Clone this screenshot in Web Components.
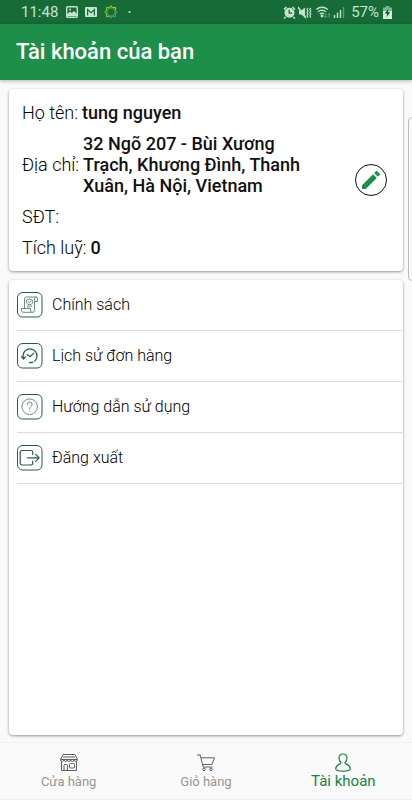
<!DOCTYPE html>
<html lang="vi">
<head>
<meta charset="utf-8">
<meta name="viewport" content="width=device-width, initial-scale=1">
<title>Tài khoản của bạn</title>
<style>
html, body { height: 100%; }
body { margin: 0; background: #fafafa; color: #111; font-family: Roboto, "Noto Sans", sans-serif; }
</style>
</head>
<body>
<account-app></account-app>
<script>
function define(name, html) {
  const template = document.createElement('template');
  template.innerHTML = html;
  customElements.define(name, class extends HTMLElement {
    constructor() {
      super();
      this.attachShadow({ mode: 'open' }).append(template.content.cloneNode(true));
    }
  });
}

define('status-bar', `
<style>
:host { display: flex; align-items: center; justify-content: space-between; height: 24px; padding: 0 20px 0 21px; background: #176b37; color: #c5e3cf; font-size: 15px; line-height: 24px; }
div { display: flex; align-items: center; }
svg { display: block; flex: none; }
.left svg:first-of-type { margin-left: 8px; }
.left svg + svg { margin-left: 7px; }
.right { gap: 2px; }
.pct { margin: 0 2px 0 4px; }
</style>
<div class="left"><span>11:48</span>
<svg width="12" height="12" viewBox="0 0 12 12"><rect x=".7" y=".7" width="10.6" height="10.6" rx="1" fill="none" stroke="#c5e3cf" stroke-width="1.4"/><path d="M1 10V8.500L4 5.500 5.700 7 8 5l3 3v2z" fill="#c5e3cf"/><circle cx="4" cy="3.500" r="1" fill="#c5e3cf"/></svg>
<svg width="12" height="12" viewBox="0 0 12 12"><rect y="1" width="12" height="10" rx="1" fill="#c5e3cf"/><path d="M2.600 9.500V3.600L6 6.600 9.400 3.600V9.500" fill="none" stroke="#176b37" stroke-width="1.2"/></svg>
<svg width="14" height="14" viewBox="0 0 14 14" fill="none" stroke-width="1"><circle cx="7" cy="7" r="4.2" stroke="#6eb541"/><path d="M5.2 2.6 7 .7l1.8 1.9M9 2.5l2.6-.1-.1 2.6" stroke="#dcc53b"/><path d="m11.4 5.2 1.9 1.8-1.9 1.8M11.5 9l.1 2.6-2.6-.1M8.8 11.4 7 13.3l-1.8-1.9" stroke="#3b9fa8"/><path d="m5 11.5-2.6.1.1-2.6M2.6 8.8.7 7l1.9-1.800M2.5 5l-.1-2.6L5 2.5" stroke="#8fc53e"/></svg>
<svg width="14" height="14" viewBox="0 0 14 14"><circle cx="4.500" cy="7" r="1.1" fill="#c5e3cf"/></svg></div>
<div class="right">
<svg width="13" height="13" viewBox="0 0 13 13"><path d="M1 3.5 3.5 1M9.5 1 12 3.5M2.5 11 1.2 12.5M10.5 11l1.3 1.5" stroke="#c5e3cf" stroke-width="1.6"/><circle cx="6.5" cy="6.8" r="5" fill="#c5e3cf"/><path d="M6.2 3.8v3.4h3" fill="none" stroke="#176b37" stroke-width="1.3"/></svg>
<svg width="14" height="13" viewBox="0 0 14 13"><path d="M1 4.5h2.2L7 1.5v10L3.2 8.5H1z" fill="#c5e3cf"/><path d="m0 1 8 11" stroke="#c5e3cf" stroke-width="1.4"/><path d="M10 2 9 3.500 10 5 9 6.5 10 8 9 9.5l1 2M12.8 2l-1 1.5 1 1.5-1 1.5 1 1.5-1 1.5 1 2" fill="none" stroke="#c5e3cf" stroke-width="1.2"/></svg>
<svg width="17" height="14" viewBox="0 0 17 14" fill="none" stroke="#c5e3cf" stroke-width="1.4"><path d="M2.3 4.5Q8 0 13.8 4.5M4 6.8Q8 3.7 12 6.8M5.8 9Q8 7.3 10.2 9"/><circle cx="8" cy="11" r=".7" fill="#c5e3cf"/><path d="M11.7 8.5v4M10.2 11l1.5 1.6 1.5-1.6M15 12.5v-4M13.7 10 15 8.4l1.4 1.6" stroke="#5e9c73" stroke-width="1"/></svg>
<svg width="12" height="14" viewBox="0 0 12 14" stroke="#c5e3cf" stroke-width="1.4"><path d="M1.5 13v-3M4.5 13V7.5M7.5 13V5"/><path d="M10.5 13V2" stroke="#5e9c73"/></svg>
<span class="pct">57%</span>
<svg width="9" height="13" viewBox="0 0 9 13"><path d="M2.7 0h3.6v1.5H9V5H0V1.5h2.7z" fill="#7fb08f"/><path d="M0 5h9v8H0z" fill="#d2ecda"/><path d="M5.3 3 1.8 7.4h2.3L3.5 11l3.8-4.8H5z" fill="#12502a"/></svg>
</div>`);

define('app-bar', `
<style>
:host { display: flex; align-items: center; height: 56px; padding: 0 16px; background: #1e8f4a; color: #fff; box-shadow: 0 1px 4px rgba(0,0,0,.3); }
h1 { margin: 0; font-size: 22px; line-height: 28px; font-weight: 500; }
</style><h1><slot></slot></h1>`);

define('surface-card', `
<style>
:host { display: block; background: #fff; border-radius: 4px; box-shadow: 0 1px 3px rgba(0,0,0,.4); }
</style><slot></slot>`);

define('info-row', `
<style>
:host { display: flex; align-items: center; gap: 4px; font-size: 18px; line-height: 21px; }
.label { flex: none; font-weight: 300; color: #000; }
.value { font-weight: 500; color: #111; }
</style>
<span class="label"><slot name="label"></slot></span><span class="value"><slot></slot></span>`);

define('edit-button', `
<style>
:host { display: block; flex: none; }
button { display: grid; place-items: center; width: 32px; height: 32px; padding: 0; border: 1px solid #111; border-radius: 50%; background: #fff; }
svg { display: block; }
</style>
<button type="button" aria-label="Chỉnh sửa"><svg width="24" height="24" viewBox="0 0 24 24" fill="#1e8f4a"><path d="M3 17.25V21h3.75L17.8 9.94l-3.75-3.75zM20.7 7.04a1 1 0 0 0 0-1.41l-2.34-2.34a1 1 0 0 0-1.41 0l-1.83 1.83 3.75 3.75z"/></svg></button>`);

define('profile-details', `
<style>
:host { display: flex; align-items: center; gap: 40px; padding: 13px 16px 13px 13px; }
.rows { flex: 1; min-width: 0; display: grid; gap: 10px; }
</style>
<div class="rows">
<info-row><span slot="label">Họ tên:</span>tung nguyen</info-row>
<info-row><span slot="label">Địa chỉ:</span>32 Ngõ 207 - Bùi Xương Trạch, Khương Đình, Thanh Xuân, Hà Nội, Vietnam</info-row>
<info-row><span slot="label">SĐT:</span></info-row>
<info-row><span slot="label">Tích luỹ:</span>0</info-row>
</div><edit-button></edit-button>`);

define('menu-item', `
<style>
:host { display: block; margin-left: 8px; border-bottom: 1px solid #dcdcdc; }
button { display: flex; align-items: center; gap: 9px; width: 100%; height: 50px; padding: 0; border: 0; background: none; font: 300 16px/20px Roboto, "Noto Sans", sans-serif; color: #000; text-align: left; }
::slotted(svg) { display: block; flex: none; }
</style><button type="button"><slot name="icon"></slot><span><slot></slot></span></button>`);

define('account-menu', `
<style>
:host { display: block; }
svg { fill: none; stroke: #285f42; stroke-width: 1; stroke-linecap: round; stroke-linejoin: round; }
.thin { stroke: #6d8f7c; }
</style>
<menu-item><svg slot="icon" width="26" height="26" viewBox="0 0 26 26"><rect x=".5" y=".5" width="24.5" height="24.5" rx="5"/><g class="thin"><path d="M7.5 16.5V6.8Q7.5 5 9.3 5h9.4q1.8 0 1.8 1.8v2.7h-3M17.5 17.3V6.8Q17.5 5 19 5M4.5 16.5h9v2q0 1.8 2 1.8t2-2v-2M4.5 16.5v1.8q0 2 2 2h9M10.2 14h4.6M10.2 16h2"/><path d="m12.5 6.8 1.3.8 1.5.2.1 1.5.7 1.2-1.1 1-1 1.1-1.5-.3-1.5.3-.7-1.3-1.2-.9.7-1.3V7.6l1.5-.1zM11.3 9.7l1 1 1.6-1.8"/></g></svg>Chính sách</menu-item>
<menu-item><svg slot="icon" width="26" height="26" viewBox="0 0 26 26"><rect x=".5" y=".5" width="24.5" height="24.5" rx="5"/><path d="M6.500 15.500A7 7 0 1 1 17.800 18M15.800 19.200q-1.500.7-3.300.4" stroke-width="1.3"/><path d="m4.5 13.7 2 2.3 2-2.3M10.2 11.5l2.8 2.2 3.7-3.6" stroke-width="1.2"/></svg>Lịch sử đơn hàng</menu-item>
<menu-item><svg slot="icon" width="26" height="26" viewBox="0 0 26 26"><rect x=".5" y=".5" width="24.5" height="24.5" rx="5"/><g class="thin"><circle cx="12.7" cy="12.7" r="7.8"/><path d="M10.2 10.7q0-2.7 2.5-2.7t2.5 2.5q0 1.2-1.3 2.1t-1.2 2.3M12.7 16.9v.3"/></g></svg>Hướng dẫn sử dụng</menu-item>
<menu-item><svg slot="icon" width="26" height="26" viewBox="0 0 26 26"><rect x=".5" y=".5" width="24.5" height="24.5" rx="5"/><path d="M15.7 9.5V7.2q0-1.7-1.7-1.7H5q-1.8 0-1.8 1.8v11Q3.2 20 5 20h9q1.7 0 1.7-1.7v-2.2M10.5 12.8h11.7M18.7 9.3l3.5 3.5-3.5 3.5" stroke-width="1.2"/></svg>Đăng xuất</menu-item>`);

define('nav-tab', `
<style>
:host { flex: 1; display: block; color: #969696; }
a { display: flex; flex-direction: column; align-items: center; color: inherit; text-decoration: none; font-size: 13px; line-height: 18px; padding-top: 10px; }
:host([active]) { color: #1a8243; }
:host([active]) a { font-size: 15px; line-height: 16px; }
::slotted(svg) { display: block; }
</style><a href="#"><slot name="icon"></slot><span><slot></slot></span></a>`);

define('bottom-nav', `
<style>
:host { display: flex; height: 58px; background: #fafafa; border-top: 1px solid #f0f0f0; border-bottom: 1px solid #eee; box-sizing: border-box; }
svg { fill: none; stroke: #5f5f5f; stroke-width: 1; stroke-linejoin: round; }
.on { stroke: #1a8243; stroke-width: 1.2; }
</style>
<nav-tab><svg slot="icon" width="20" height="20" viewBox="0 0 20 20"><path d="M4 1.5h12l2.5 5H1.5zM1.5 6.5q0 2 1.7 2t1.7-2q0 2 1.7 2t1.7-2q0 2 1.7 2t1.7-2q0 2 1.7 2t1.7-2q0 2 1.7 2t1.7-2M2.5 8.5v9h15v-9M5 17.5v-5q0-1 1-1h1.5q1 0 1 1v5M4 4h12"/><rect x="10.5" y="10.5" width="5" height="4.5" rx="1"/></svg>Cửa hàng</nav-tab>
<nav-tab><svg slot="icon" width="20" height="20" viewBox="0 0 20 20"><path d="M1 2h3.2l3 12h9.3M5 4.8h13.5L16 11.5H6.6"/><circle cx="8" cy="16.3" r="1.3"/><circle cx="15" cy="16.3" r="1.3"/></svg>Giỏ hàng</nav-tab>
<nav-tab active><svg class="on" slot="icon" width="20" height="20" viewBox="0 0 20 20"><path d="M10 1C7.5 1 6 2.8 6 5.200c0 2.200 1 3.600 2 4.300.5 1.800-4.800 1.500-5.300 6 0 1.700 3 2.700 7.300 2.700s7.300-1 7.300-2.700c-.5-4.500-5.800-4.200-5.300-6 1-.7 2-2.100 2-4.300C14 2.800 12.500 1 10 1z"/></svg>Tài khoản</nav-tab>`);

define('account-app', `
<style>
:host { display: flex; flex-direction: column; min-height: 100%; overflow: hidden; position: relative; }
main { flex: 1; display: flex; flex-direction: column; gap: 9px; padding: 9px 9px 7px; }
.menu { flex: 1; }
.edge { position: absolute; top: 117px; right: -4px; width: 8px; height: 164px; box-sizing: border-box; border: 1px solid #bbb; border-radius: 6px; background: #fafafa; }
</style>
<status-bar></status-bar>
<app-bar>Tài khoản của bạn</app-bar>
<main>
<surface-card><profile-details></profile-details></surface-card>
<surface-card class="menu"><account-menu></account-menu></surface-card>
</main>
<bottom-nav></bottom-nav>
<div class="edge"></div>`);
</script>
</body>
</html>
